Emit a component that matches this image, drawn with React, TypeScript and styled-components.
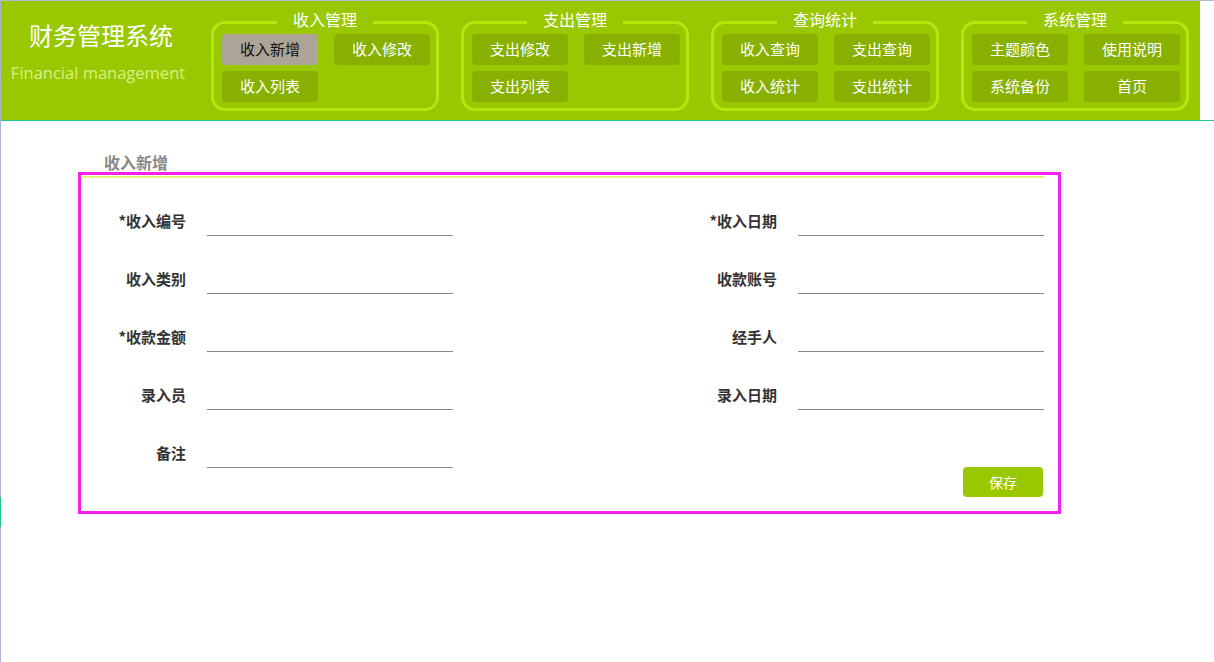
import React from 'react';
import styled, { createGlobalStyle } from 'styled-components';

const GlobalStyle = createGlobalStyle`
  html, body {
    margin: 0;
    padding: 0;
    background: #fff;
  }
  body {
    font-family: "Noto Sans CJK SC", "Noto Sans", sans-serif;
  }
  * {
    box-sizing: border-box;
  }
`;

const groups = [
  { title: '收入管理', items: ['收入新增', '收入修改', '收入列表'] },
  { title: '支出管理', items: ['支出修改', '支出新增', '支出列表'] },
  { title: '查询统计', items: ['收入查询', '支出查询', '收入统计', '支出统计'] },
  { title: '系统管理', items: ['主题颜色', '使用说明', '系统备份', '首页'] },
];

const fields = [
  { label: '*收入编号' },
  { label: '*收入日期' },
  { label: '收入类别' },
  { label: '收款账号' },
  { label: '*收款金额' },
  { label: '经手人' },
  { label: '录入员' },
  { label: '录入日期' },
  { label: '备注' },
];

export default function App() {
  return (
    <Page>
      <GlobalStyle />
      <SideMark />
      <HeaderWrap>
        <Header>
          <Brand>
            <BrandTitle>财务管理系统</BrandTitle>
            <BrandSub>Financial management</BrandSub>
          </Brand>
          <Groups>
            {groups.map((g) => (
              <Group key={g.title}>
                <GroupTitle>{g.title}</GroupTitle>
                <GroupGrid>
                  {g.items.map((it) => (
                    <NavButton key={it} $active={it === '收入新增'}>
                      {it}
                    </NavButton>
                  ))}
                </GroupGrid>
              </Group>
            ))}
          </Groups>
        </Header>
      </HeaderWrap>

      <Main>
        <SectionTitle>收入新增</SectionTitle>
        <FormBox>
          <FormInner>
            <FieldGrid>
              {fields.map((f) => (
                <Field key={f.label}>
                  <Label>{f.label}</Label>
                  <Input type="text" />
                </Field>
              ))}
            </FieldGrid>
            <Footer>
              <SaveButton>保存</SaveButton>
            </Footer>
          </FormInner>
        </FormBox>
      </Main>
    </Page>
  );
}

const Page = styled.div`
  position: relative;
  min-height: 662px;
  border-top: 1px solid #b2bacb;
  border-left: 1px solid #aab4cc;
`;

const SideMark = styled.div`
  position: absolute;
  left: -1px;
  top: 496px;
  width: 1px;
  height: 30px;
  background: #1ec98a;
`;

const HeaderWrap = styled.div`
  border-bottom: 1px solid #1ec98a;
`;

const Header = styled.header`
  width: 1199px;
  height: 119px;
  background: #99c800;
  display: flex;
  align-items: flex-start;
`;

const Brand = styled.div`
  width: 194px;
  padding-top: 18px;
  display: flex;
  flex-direction: column;
  align-items: center;
`;

const BrandTitle = styled.h1`
  margin: 0 0 0 6px;
  font-size: 24px;
  line-height: 32px;
  font-weight: 400;
  color: #fff;
`;

const BrandSub = styled.div`
  margin-top: 11px;
  font-family: "Open Sans", "Noto Sans", sans-serif;
  font-size: 16.5px;
  line-height: 22px;
  color: #d4f386;
`;

const Groups = styled.nav`
  display: flex;
  gap: 22px;
  margin-left: 16px;
  margin-top: 20px;
`;

const Group = styled.div`
  position: relative;
  width: 228px;
  height: 90px;
  border: 3px solid #b5e80a;
  border-radius: 14px;
  padding: 10px 6px 3px 8px;
`;

const GroupTitle = styled.span`
  position: absolute;
  top: -14px;
  left: 50%;
  transform: translateX(-50%);
  padding: 0 16px;
  background: #99c800;
  color: #fff;
  font-size: 16px;
  line-height: 18px;
  white-space: nowrap;
`;

const GroupGrid = styled.div`
  display: grid;
  grid-template-columns: 96px 96px;
  column-gap: 16px;
  row-gap: 6px;
`;

const NavButton = styled.button<{ $active?: boolean }>`
  height: 31px;
  border: none;
  border-radius: 4px;
  padding: 0 0 3px;
  font-family: inherit;
  font-size: 15px;
  background: ${(p) => (p.$active ? '#aca597' : '#87b000')};
  color: ${(p) => (p.$active ? '#111' : '#fff')};
  cursor: pointer;
`;

const Main = styled.main`
  padding: 31px 0 0 77px;
`;

const SectionTitle = styled.h2`
  margin: 0 0 0 26px;
  font-size: 16px;
  line-height: 20px;
  font-weight: 700;
  color: #888;
`;

const FormBox = styled.section`
  width: 983px;
  height: 342px;
  border: 3px solid #f321f0;
  padding: 1px 0 0 1px;
`;

const FormInner = styled.div`
  width: 962px;
  border-top: 2px solid #e1f77c;
  padding: 27px 0 0 4px;
`;

const FieldGrid = styled.div`
  display: grid;
  grid-template-columns: 367px 367px;
  column-gap: 224px;
  row-gap: 27px;
`;

const Field = styled.div`
  display: flex;
  align-items: center;
  gap: 21px;
`;

const Label = styled.label`
  width: 100px;
  padding-bottom: 1px;
  text-align: right;
  font-size: 15px;
  font-weight: 700;
  color: #333;
`;

const Input = styled.input`
  width: 246px;
  height: 31px;
  border: none;
  border-bottom: 1px solid #888;
  outline: none;
  background: transparent;
  font-family: inherit;
  font-size: 14px;
`;

const Footer = styled.div`
  display: flex;
  justify-content: flex-end;
  margin-top: -1px;
  padding-right: 1px;
`;

const SaveButton = styled.button`
  width: 80px;
  height: 30px;
  border: none;
  border-radius: 4px;
  background: #99c800;
  color: #fff;
  font-family: inherit;
  font-size: 14px;
  cursor: pointer;
`;
